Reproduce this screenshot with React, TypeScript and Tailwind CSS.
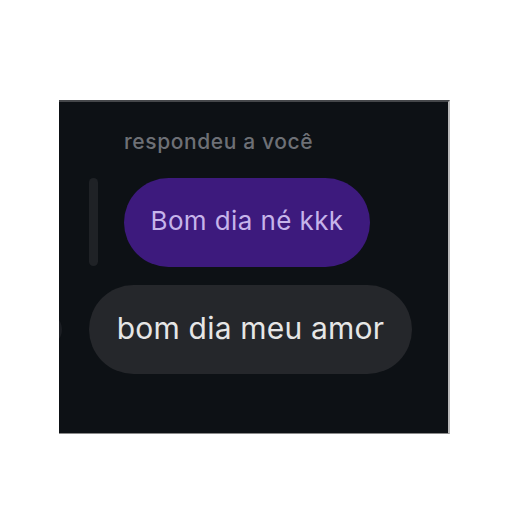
import React from 'react';

export default function App() {
  return (
    <div className="w-[512px] h-[512px] bg-white pt-[100px] pl-[59px]" style={{ fontFamily: 'Inter, "Noto Sans", sans-serif' }}>
      <div className="w-[391px] h-[334px] bg-[#0d1115] border-t-2 border-t-[#45474a] border-r-2 border-r-[#b9b9b9] border-b border-b-[#8a8a8a] overflow-hidden">
        {/* Reply label */}
        <div className="pl-[65px] pt-[28px] text-[21px] leading-[24px] font-medium text-[#6d7076] tracking-[0.6px]">
          respondeu a você
        </div>

        {/* Quoted message */}
        <div className="flex items-start mt-[24px] pl-[30px]">
          <div className="w-[9px] h-[88px] rounded-full bg-[#1f2226]" />
          <div className="ml-[26px] w-[246px] h-[89px] pb-[4px] rounded-full bg-[#3d1a7d] flex items-center justify-center text-[26px] text-[#c6b4ea] tracking-[0.4px]">
            Bom dia né kkk
          </div>
        </div>

        {/* Message */}
        <div className="flex items-center mt-[18px]">
          <div className="-ml-[30px] w-[33px] h-[33px] rounded-full bg-[#1b1e23] shrink-0" />
          <div className="ml-[27px] w-[323px] h-[89px] pb-[2px] rounded-full bg-[#25272b] flex items-center justify-center text-[30px] text-[#e6e6e6] tracking-[0.2px]">
            bom dia meu amor
          </div>
        </div>
      </div>
    </div>
  );
}
